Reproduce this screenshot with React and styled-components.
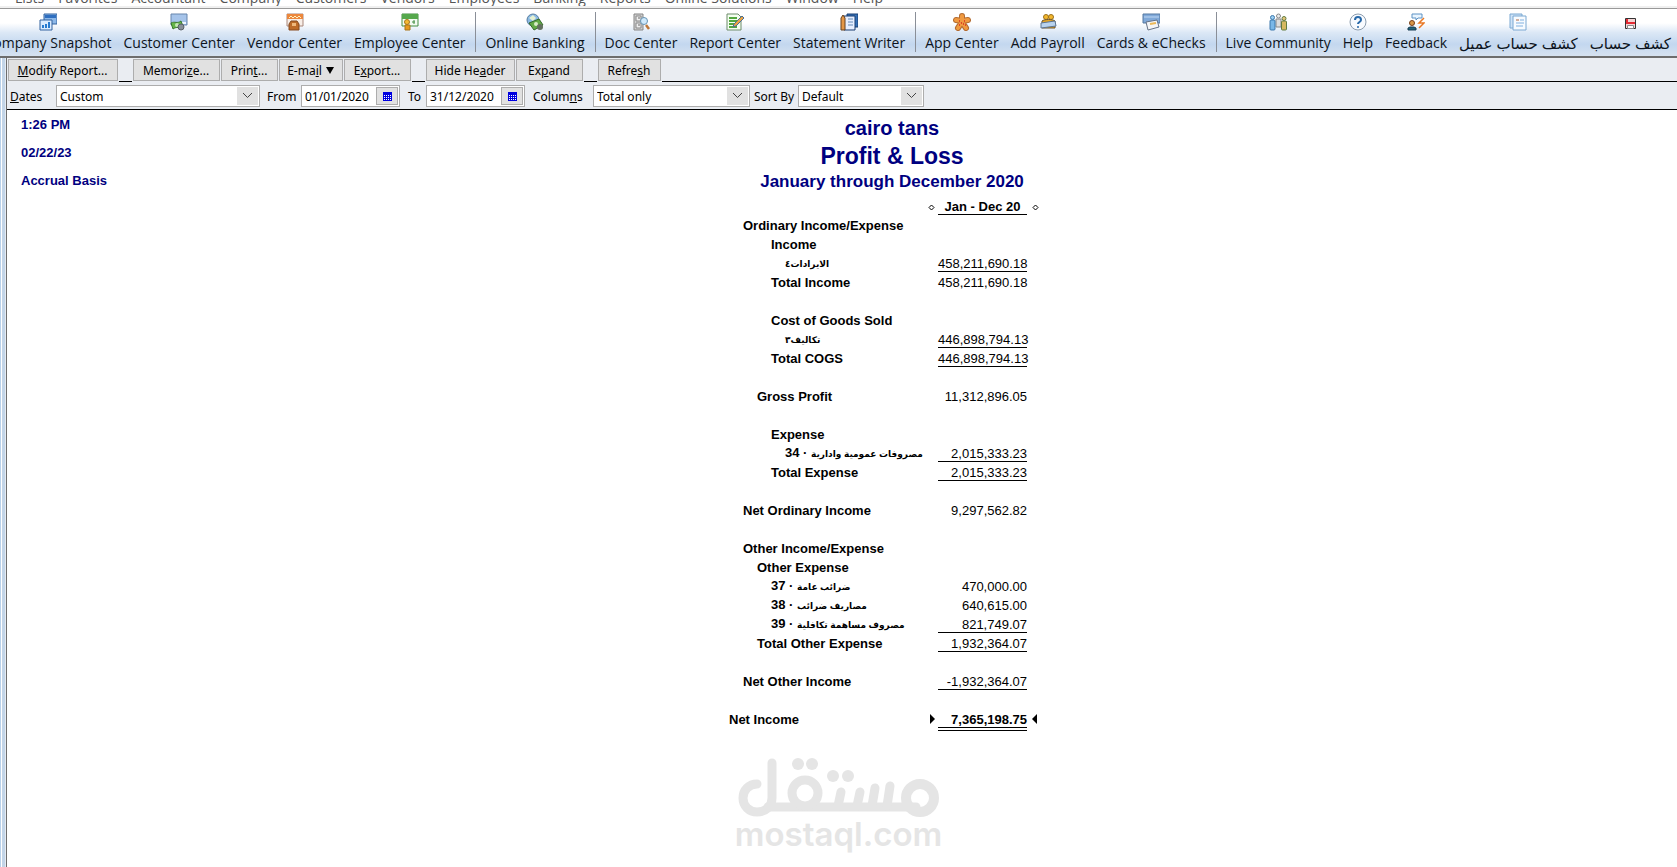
import React from 'react';
import styled, { createGlobalStyle } from 'styled-components';

const GlobalStyle = createGlobalStyle`
  * {
    box-sizing: border-box;
  }
  body {
    margin: 0;
    background: white;
    color: black;
    font-family: 'Open Sans', 'Noto Sans', sans-serif;
  }
  #root {
    min-height: 100vh;
    display: flex;
    flex-direction: column;
  }
`;

const MenuBar = styled.nav`
  height: 8px;
  padding-left: 15px;
  display: flex;
  align-items: flex-end;
  gap: 14px;
  overflow: hidden;
  border-bottom: 2px solid #f0f0f0;
  a {
    color: #555;
    font-size: 14px;
    line-height: 16px;
    white-space: nowrap;
    text-decoration: none;
  }
`;

const IconBar = styled.div`
  height: 50px;
  display: flex;
  justify-content: flex-end;
  overflow: hidden;
  border-top: 1px solid #999;
  border-bottom: 2px solid #6d6d6d;
  background: linear-gradient(#fff 30%, #dce8f6 50%, #c3d7ef 75%, #d6e2f0);
`;

const IconButton = styled.button`
  flex: none;
  display: flex;
  flex-direction: column;
  align-items: center;
  gap: 2px;
  padding: 4px 6px 0;
  border: 0;
  background: none;
  color: #0d1420;
  font-family: 'Open Sans', 'DejaVu Sans', sans-serif;
  font-size: 14px;
  line-height: 20px;
  white-space: nowrap;
  &:lang(ar) {
    font-size: 15px;
  }
  svg {
    display: block;
  }
`;

const Divider = styled.span`
  flex: none;
  width: 1px;
  height: 40px;
  margin: 3px 3px 0 4px;
  background: #8a8f98;
`;

const ReportWindow = styled.main`
  flex: 1;
  display: flex;
  flex-direction: column;
  padding-left: 7px;
  background: linear-gradient(
    to right,
    #b9d1ea 1px,
    white 1px 2px,
    #c3d5e8 2px 5px,
    #e4ebf3 5px 6px,
    #6d6d6d 6px 7px,
    white 7px
  );
`;

const ButtonBar = styled.div`
  display: flex;
  height: 24px;
  background: #eaedf2;
`;

const ButtonGroup = styled.div`
  display: flex;
  gap: 1px;
  padding: 1px 1px 0;
`;

const GroupGap = styled.span`
  width: ${(props) => (props.$fill ? 'auto' : '13px')};
  flex: ${(props) => (props.$fill ? '1' : 'none')};
  border-bottom: 1px solid black;
`;

const ToolButton = styled.button`
  width: ${(props) => props.$width}px;
  height: 22px;
  padding: 1px 1px 0 0;
  border: 1px solid #adadad;
  background: #e1e1e1;
  color: black;
  font-family: 'Noto Sans', sans-serif;
  font-size: 12px;
  line-height: 18px;
  white-space: nowrap;
  svg {
    margin-left: 4px;
    vertical-align: 1px;
  }
`;

const FilterBar = styled.form`
  display: flex;
  align-items: center;
  height: 28px;
  padding: 1px 3px 0;
  border-bottom: 1px solid black;
  background: #eaedf2;
  font-family: 'Noto Sans', sans-serif;
  font-size: 12px;
`;

const Label = styled.label`
  width: ${(props) => props.$width}px;
  padding-top: 1px;
  white-space: nowrap;
`;

const SelectBox = styled.div`
  position: relative;
  width: ${(props) => props.$width}px;
  height: 22px;
  margin-right: ${(props) => props.$after || 0}px;
  border: 1px solid #adadad;
  background: white;
  select {
    width: 100%;
    height: 100%;
    padding: 1px 24px 0 3px;
    border: 0;
    appearance: none;
    background: none;
    color: black;
    font: inherit;
  }
  svg {
    position: absolute;
    top: 1px;
    right: 1px;
    pointer-events: none;
  }
`;

const DateBox = styled.div`
  display: flex;
  width: 99px;
  height: 22px;
  margin-right: 8px;
  border: 1px solid #adadad;
  background: white;
  input {
    flex: 1;
    min-width: 0;
    padding: 1px 0 0 3px;
    border: 0;
    font: inherit;
  }
  button {
    width: 22px;
    height: 18px;
    margin: 1px;
    padding: 0;
    display: flex;
    align-items: center;
    justify-content: center;
    border: 1px solid #adadad;
    background: #e1e1e1;
  }
`;

const Report = styled.section`
  display: flex;
  color: black;
  font-family: 'Liberation Sans', Arial, sans-serif;
  font-size: 13px;
`;

const ReportAside = styled.aside`
  flex: 0 0 100px;
  padding: 7px 0 0 14px;
  display: flex;
  flex-direction: column;
  gap: 12px;
  color: #000080;
  font-weight: 700;
  line-height: 16px;
  white-space: nowrap;
`;

const ReportBody = styled.div`
  flex: 1;
  padding-top: 5px;
  display: flex;
  flex-direction: column;
  align-items: center;
`;

const Heading = styled.h2`
  margin: 0;
  color: #000080;
  font-size: ${(props) => props.$size}px;
  line-height: ${(props) => props.$line}px;
`;

const Statement = styled.table`
  width: 326px;
  margin-top: 3px;
  table-layout: fixed;
  border-collapse: collapse;
  tr {
    height: 19px;
  }
  th,
  td {
    padding: 0;
    line-height: 16px;
    vertical-align: bottom;
    white-space: nowrap;
  }
`;

const RowLabel = styled.th`
  text-align: left;
  font-weight: 700;
  span {
    padding-left: ${(props) => props.$level * 14}px;
  }
  bdi {
    font-family: 'Liberation Sans', 'DejaVu Sans', sans-serif;
    font-size: 9px;
  }
`;

const Amount = styled.div`
  height: ${(props) => (props.$line === 'double' ? '20px' : '17px')};
  margin-bottom: ${(props) => (props.$line === 'double' ? '-3px' : '0')};
  border-bottom: ${(props) =>
    props.$line === 'double' ? '4px double black' : props.$line ? '1px solid black' : '1px solid transparent'};
  line-height: 18px;
  text-align: ${(props) => (props.$center ? 'center' : 'right')};
  font-weight: ${(props) => (props.$bold ? 700 : 400)};
`;

const Marker = styled.td`
  svg {
    display: block;
    margin: ${(props) => (props.$right ? '0 0 4px 5px' : '0 3px 4px auto')};
  }
`;

const Watermark = styled.footer`
  display: flex;
  flex-direction: column;
  align-items: center;
  padding: 30px 7px 0 0;
  color: #e5e5e5;
  font-family: Inter, sans-serif;
  font-size: 33px;
  font-weight: 600;
  line-height: 32px;
  svg {
    display: block;
  }
`;

const icons = {
  snapshot: (
    <>
      <path d="M5 1h13v10H5z" fill="#8db8e8" stroke="#33629f" />
      <path d="M6 2h11v3H6z" fill="#2f6fc0" />
      <path d="M1 7h12v10H1z" fill="#dcecff" stroke="#33629f" />
      <path d="M4 15v-3M7 15v-4M10 15V9" stroke="#287bd0" strokeWidth="2" />
    </>
  ),
  customer: (
    <>
      <path d="M1 1h16v11H1z" fill="#a6c4ea" stroke="#6685ac" />
      <path d="M2 9h14v2H2z" fill="#eef5ff" />
      <path d="M1 10c4-2 6 1 10-2l2 5c-4 3-6 0-10 3z" fill="#65b548" stroke="#38772e" />
      <circle cx="7" cy="12" r="2" fill="#c4e7b4" />
      <circle cx="11" cy="14" r="3" fill="#889098" stroke="#596069" />
    </>
  ),
  vendor: (
    <>
      <path d="M1 1h16v12H1z" fill="#f8eee7" stroke="#a9877a" />
      <path d="M1 1h16v5H1z" fill="#ec873c" />
      <path d="M3 5l2-2 2 2 2-2 2 2 2-2 2 2" fill="none" stroke="#fff0c0" />
      <path d="M3 11l2-3h6l2 3v6H3z" fill="#bd6b29" stroke="#854b20" />
      <path d="M6 10h4v3H6z" fill="#efb87c" />
    </>
  ),
  employee: (
    <>
      <path d="M1 1h16v12H1z" fill="#f3fbf1" stroke="#438d43" />
      <path d="M1 1h16v5H1z" fill="#55a84c" />
      <path d="M11 9h3M13 7v4" stroke="#438d43" />
      <circle cx="6" cy="9" r="2.5" fill="#f5b932" stroke="#a7741a" />
      <path d="M4 12h5v5H4z" fill="#e89a1c" stroke="#a7741a" strokeLinejoin="round" />
    </>
  ),
  banking: (
    <>
      <circle cx="7" cy="7" r="6" fill="#8ab9e3" stroke="#577da0" />
      <path d="M3 5l4-3 3 3-3 3z" fill="#e5f1d2" />
      <path d="M3 10l10-4 4 6-9 5z" fill="#62aa46" stroke="#35692c" />
      <circle cx="10" cy="11" r="2" fill="#d8edc8" />
      <circle cx="14" cy="14" r="3" fill="#63705f" />
    </>
  ),
  doc: (
    <>
      <path d="M2 1h9v16H2z" fill="#d0d0d0" stroke="#858585" />
      <path d="M4 3h5v5H4zM4 10h5v5H4z" fill="#eee" stroke="#888" />
      <path d="M6 5h2M6 12h2" stroke="#666" />
      <circle cx="12" cy="8" r="3.5" fill="#cfe9fb" stroke="#6794b4" />
      <path d="M14 12l3 4" stroke="#bd7739" strokeWidth="2.5" />
    </>
  ),
  report: (
    <>
      <path d="M1 1h11l3 3v13H1z" fill="#f4fff0" stroke="#6c8b6a" />
      <path d="M3 5h8M3 8h9M3 11h6M3 14h8" stroke="#53a83f" strokeWidth="2" />
      <path d="M16 3l2 2-8 8-3 1 1-3z" fill="#eaa443" stroke="#4c6e97" />
    </>
  ),
  writer: (
    <>
      <path d="M7 1h11v13H7z" fill="#3672b8" stroke="#183c71" />
      <path d="M4 3h11v14H4z" fill="#e7efff" stroke="#183c71" />
      <path d="M8 6h5M8 9h5M8 12h5" stroke="#648bb8" />
      <path d="M1 5l2-3 2 3v12H1z" fill="#e59746" stroke="#664323" />
    </>
  ),
  app: (
    <>
      <path
        d="M9 3v6M9 8L3 7M9 8l6-1M9 9l-4 6M9 9l4 6"
        fill="none"
        stroke="#b36b30"
        strokeWidth="6"
        strokeLinecap="round"
      />
      <path
        d="M9 3v6M9 8L3 7M9 8l6-1M9 9l-4 6M9 9l4 6"
        fill="none"
        stroke="#f09a40"
        strokeWidth="4"
        strokeLinecap="round"
      />
      <path d="M6 8h1M11 8h1M8 10h1M10 11h1M6 12h1M12 12h1" stroke="#d92b20" strokeWidth="1.5" />
    </>
  ),
  payroll: (
    <>
      <circle cx="7" cy="4" r="2.5" fill="#f3b72d" stroke="#9c711c" />
      <circle cx="12" cy="4" r="2.5" fill="#f3b72d" stroke="#9c711c" />
      <path d="M3 8c2-2 11-2 13 0v7H3z" fill="#e5a626" stroke="#6a5530" />
      <path d="M2 10l14-2 1 5-15 2z" fill="#b9d3ee" stroke="#5d7693" />
    </>
  ),
  cards: (
    <>
      <path d="M1 1h17v9H1z" fill="#80a9d9" stroke="#5578a1" />
      <path d="M2 4h15" stroke="#bed7f3" />
      <path d="M4 9l11-2 2 7-11 3z" fill="#f4f5f7" stroke="#657286" />
      <path d="M8 11l6-1" stroke="#ecb857" strokeWidth="2" />
    </>
  ),
  community: (
    <>
      <path d="M7 6h5v8H7z" fill="#ddd" stroke="#888" />
      <circle cx="9.5" cy="3" r="2" fill="#eee" stroke="#888" />
      <rect x="1" y="7" width="5" height="10" rx="1" fill="#79b7e8" stroke="#3c78ac" />
      <circle cx="3.5" cy="4.5" r="2" fill="#9bd0f4" stroke="#3c78ac" />
      <rect x="12.5" y="8" width="5" height="9" rx="1" fill="#d6b861" stroke="#607b42" />
      <circle cx="15" cy="5.5" r="2" fill="#e5c778" stroke="#607b42" />
    </>
  ),
  help: (
    <>
      <circle cx="9" cy="9" r="8" fill="#f8fbff" stroke="#8b9cae" />
      <path d="M6 7c0-4 6-4 6 0 0 2-3 2-3 4" fill="none" stroke="#2869a9" strokeWidth="2" />
      <circle cx="9" cy="14" r="1" fill="#2869a9" />
    </>
  ),
  feedback: (
    <>
      <path d="M5 1h10v4h-4l-2 2V5H5z" fill="#e9f5ff" stroke="#5c92c4" />
      <circle cx="5" cy="10" r="2.5" fill="#d99748" stroke="#76401c" />
      <path d="M1 17v-2l2-1h4l2 1v2z" fill="#23647a" stroke="#173d55" />
      <path d="M17 5l-5 5h5l-5 5" fill="none" stroke="#e97824" strokeWidth="1.5" />
    </>
  ),
  pages: (
    <>
      <path d="M1 1h12v14H1z" fill="#cfe3f7" stroke="#7aa8d2" />
      <path d="M4 3h13v14H4z" fill="#f7fbff" stroke="#7aa8d2" />
      <path d="M7 7h3M11 7h4M7 10h8M7 13h7" stroke="#81b1e0" />
      <path d="M7 7h3" stroke="#e68a55" />
    </>
  ),
  floppy: (
    <>
      <path d="M4.500 5.500h10v10h-10z" fill="#f3d5d5" stroke="#333" />
      <path d="M5 6h2v3h7v2H5z" fill="#e42b34" />
      <path d="M6.500 12.500h6v3h-6z" fill="#fff" stroke="#888" />
    </>
  ),
};

const tools = [
  { title: 'Company Snapshot', icon: 'snapshot' },
  { title: 'Customer Center', icon: 'customer' },
  { title: 'Vendor Center', icon: 'vendor' },
  { title: 'Employee Center', icon: 'employee', divider: true },
  { title: 'Online Banking', icon: 'banking', divider: true },
  { title: 'Doc Center', icon: 'doc' },
  { title: 'Report Center', icon: 'report' },
  { title: 'Statement Writer', icon: 'writer', divider: true },
  { title: 'App Center', icon: 'app' },
  { title: 'Add Payroll', icon: 'payroll' },
  { title: 'Cards & eChecks', icon: 'cards', divider: true },
  { title: 'Live Community', icon: 'community' },
  { title: 'Help', icon: 'help' },
  { title: 'Feedback', icon: 'feedback' },
  { title: 'كشف حساب عميل', icon: 'pages', lang: 'ar' },
  { title: 'كشف حساب', icon: 'floppy', lang: 'ar' },
];

const menus = [
  'Lists',
  'Favorites',
  'Accountant',
  'Company',
  'Customers',
  'Vendors',
  'Employees',
  'Banking',
  'Reports',
  'Online Solutions',
  'Window',
  'Help',
];

const rows = [
  { label: 'Ordinary Income/Expense', level: 1 },
  { label: 'Income', level: 3 },
  { arabic: 'الايرادات٤', level: 4, amount: '458,211,690.18', line: true },
  { label: 'Total Income', level: 3, amount: '458,211,690.18' },
  {},
  { label: 'Cost of Goods Sold', level: 3 },
  { arabic: 'تكاليف٣', level: 4, amount: '446,898,794.13', line: true },
  { label: 'Total COGS', level: 3, amount: '446,898,794.13', line: true },
  {},
  { label: 'Gross Profit', level: 2, amount: '11,312,896.05' },
  {},
  { label: 'Expense', level: 3 },
  { label: '34 · ', arabic: 'مصروفات عمومية وادارية', level: 4, amount: '2,015,333.23', line: true },
  { label: 'Total Expense', level: 3, amount: '2,015,333.23', line: true },
  {},
  { label: 'Net Ordinary Income', level: 1, amount: '9,297,562.82' },
  {},
  { label: 'Other Income/Expense', level: 1 },
  { label: 'Other Expense', level: 2 },
  { label: '37 · ', arabic: 'ضرائب عامة', level: 3, amount: '470,000.00' },
  { label: '38 · ', arabic: 'مصاريف ضرائب', level: 3, amount: '640,615.00' },
  { label: '39 · ', arabic: 'مصروف مساهمة تكافلية', level: 3, amount: '821,749.07', line: true },
  { label: 'Total Other Expense', level: 2, amount: '1,932,364.07', line: true },
  {},
  { label: 'Net Other Income', level: 1, amount: '-1,932,364.07', line: true },
  {},
  { label: 'Net Income', level: 0, amount: '7,365,198.75', line: 'double', total: true },
];

const Select = ({ id, value, width, after }) => (
  <SelectBox $width={width} $after={after}>
    <select id={id} defaultValue={value}>
      <option>{value}</option>
    </select>
    <svg width="21" height="18">
      <path d="M0 0h21v18H0z" fill="#e1e1e1" />
      <path d="M6 6l4.500 4.500L15 6" fill="none" stroke="#444" />
    </svg>
  </SelectBox>
);

const DateField = ({ id, value }) => (
  <DateBox>
    <input id={id} defaultValue={value} />
    <button type="button" aria-label="Open calendar">
      <svg width="9" height="9">
        <path d="M0 0h9v9H0z" fill="#0000e0" />
        <path d="M1 3.500h7M1 5.500h7M1 7.500h7" stroke="#fff" strokeDasharray="1 1" />
      </svg>
    </button>
  </DateBox>
);

const Diamond = () => (
  <svg width="7" height="7">
    <path d="M3.500 1L6 3.500 3.500 6 1 3.500z" fill="none" stroke="black" />
  </svg>
);

const Logo = () => (
  <svg width="202" height="60" viewBox="0 0 202 60" fill="none" stroke="currentColor" strokeLinecap="round">
    <path d="M19 26C11 26 5 32 5 40s6 14 14 14c9 0 15-6 15-14V5" strokeWidth="9" />
    <path d="M30 49H178" strokeWidth="9" />
    <circle cx="67" cy="35" r="13" strokeWidth="9" />
    <circle cx="182" cy="40" r="14" strokeWidth="10" />
    <path d="M103 34l-3 14M122 34l-3 14M137 30l-3 18M152 28l-3 20" strokeWidth="9" />
    <g fill="currentColor" stroke="none">
      <circle cx="60" cy="6" r="6" />
      <circle cx="74" cy="6" r="6" />
      <circle cx="95" cy="18" r="6" />
      <circle cx="110" cy="18" r="6" />
    </g>
  </svg>
);

const App = () => {
  return (
    <>
      <GlobalStyle />
      <MenuBar>
        {menus.map((menu) => (
          <a key={menu} href="#menu">
            {menu}
          </a>
        ))}
      </MenuBar>
      <IconBar>
        {tools.map((tool) => (
          <React.Fragment key={tool.title}>
            <IconButton lang={tool.lang}>
              <svg width="18" height="18" viewBox="0 0 18 18">
                {icons[tool.icon]}
              </svg>
              {tool.title}
            </IconButton>
            {tool.divider && <Divider />}
          </React.Fragment>
        ))}
      </IconBar>
      <ReportWindow>
        <ButtonBar>
          <ButtonGroup>
            <ToolButton $width={110}>
              <u>M</u>odify Report...
            </ToolButton>
          </ButtonGroup>
          <GroupGap />
          <ButtonGroup>
            <ToolButton $width={87}>
              Memori<u>z</u>e...
            </ToolButton>
            <ToolButton $width={57}>
              Prin<u>t</u>...
            </ToolButton>
            <ToolButton $width={64}>
              E-ma<u>i</u>l
              <svg width="8" height="7">
                <path d="M0 0h8L4 7z" />
              </svg>
            </ToolButton>
            <ToolButton $width={67}>
              E<u>x</u>port...
            </ToolButton>
          </ButtonGroup>
          <GroupGap />
          <ButtonGroup>
            <ToolButton $width={89}>
              Hide He<u>a</u>der
            </ToolButton>
            <ToolButton $width={67}>
              Ex<u>p</u>and
            </ToolButton>
          </ButtonGroup>
          <GroupGap />
          <ButtonGroup>
            <ToolButton $width={63}>
              Refre<u>s</u>h
            </ToolButton>
          </ButtonGroup>
          <GroupGap $fill />
        </ButtonBar>
        <FilterBar>
          <Label htmlFor="dates" $width={46}>
            <u>D</u>ates
          </Label>
          <Select id="dates" value="Custom" width={204} after={7} />
          <Label htmlFor="from" $width={34}>
            From
          </Label>
          <DateField id="from" value="01/01/2020" />
          <Label htmlFor="to" $width={18}>
            To
          </Label>
          <DateField id="to" value="31/12/2020" />
          <Label htmlFor="columns" $width={60}>
            Colum<u>n</u>s
          </Label>
          <Select id="columns" value="Total only" width={157} after={4} />
          <Label htmlFor="sort" $width={44}>
            Sort By
          </Label>
          <Select id="sort" value="Default" width={126} />
        </FilterBar>
        <Report>
          <ReportAside>
            <div>1:26 PM</div>
            <div>02/22/23</div>
            <div>Accrual Basis</div>
          </ReportAside>
          <ReportBody>
            <Heading $size={20} $line={26}>
              cairo tans
            </Heading>
            <Heading $size={23} $line={30}>
              Profit &amp; Loss
            </Heading>
            <Heading $size={17} $line={22}>
              January through December 2020
            </Heading>
            <Statement>
              <colgroup>
                <col width="196" />
                <col width="13" />
                <col width="89" />
                <col width="28" />
              </colgroup>
              <thead>
                <tr>
                  <td />
                  <Marker>
                    <Diamond />
                  </Marker>
                  <th scope="col">
                    <Amount $line $bold $center>
                      Jan - Dec 20
                    </Amount>
                  </th>
                  <Marker $right>
                    <Diamond />
                  </Marker>
                </tr>
              </thead>
              <tbody>
                {rows.map((row, index) => (
                  <tr key={index}>
                    <RowLabel scope="row" $level={row.level || 0}>
                      <span>
                        {row.label}
                        {row.arabic && <bdi lang="ar">{row.arabic}</bdi>}
                      </span>
                    </RowLabel>
                    <Marker>
                      {row.total && (
                        <svg width="5" height="10">
                          <path d="M0 0l5 5-5 5z" />
                        </svg>
                      )}
                    </Marker>
                    <td>
                      {row.amount && (
                        <Amount $line={row.line} $bold={row.total}>
                          {row.amount}
                        </Amount>
                      )}
                    </td>
                    <Marker $right>
                      {row.total && (
                        <svg width="5" height="10">
                          <path d="M5 0L0 5l5 5z" />
                        </svg>
                      )}
                    </Marker>
                  </tr>
                ))}
              </tbody>
            </Statement>
          </ReportBody>
        </Report>
        <Watermark>
          <Logo />
          mostaql.com
        </Watermark>
      </ReportWindow>
    </>
  );
};

export default App;
